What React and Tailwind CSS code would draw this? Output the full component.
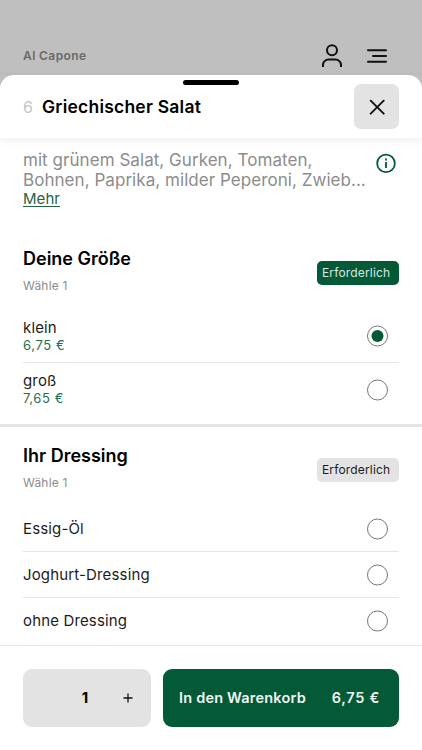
import React, { useState } from "react";

const sizes = [
  { name: "klein", price: "6,75 €" },
  { name: "groß", price: "7,65 €" },
];

const dressings = [
  { name: "Essig-Öl" },
  { name: "Joghurt-Dressing" },
  { name: "ohne Dressing" },
];

const Radio = ({ checked }) => (
  <svg width="22" height="22" viewBox="0 0 22 22" fill="none" className="mr-[11px] shrink-0">
    <circle cx="11.5" cy="11" r="10" stroke="#777777" strokeWidth="1" />
    {checked && <circle cx="11.5" cy="11" r="6" fill="#045a37" />}
  </svg>
);

const GroupHeader = ({ title, active }) => (
  <div className="flex h-[52px] items-center justify-between">
    <div>
      <h2 className="h-[27px] text-[18px] leading-6 font-semibold text-black">{title}</h2>
      <p className="h-[25px] text-[12px] leading-6 tracking-[0.2px] text-[#8c8c8c]">
        Wähle 1
      </p>
    </div>
    <span
      className={`flex h-6 w-[82px] items-center rounded-[5px] pl-[5px] text-[12px] tracking-[0.16px] ${
        active ? "bg-[#045a37] text-[#d9e6e0]" : "bg-[#e3e3e3] text-[#1c1c1c]"
      }`}>
      Erforderlich
    </span>
  </div>
);

const Option = ({ option, checked, onSelect, className }) => (
  <button
    onClick={onSelect}
    className={`flex w-full items-center justify-between text-left ${className}`}>
    <span>
      <span className="block text-[15px] leading-[18px] tracking-[0.15px] text-[#1c1c1c]">
        {option.name}
      </span>
      {option.price && (
        <span className="block text-[13px] leading-[17px] tracking-[0.6px] text-[#1f6f4d]">
          {option.price}
        </span>
      )}
    </span>
    <Radio checked={checked} />
  </button>
);

const App = () => {
  const [size, setSize] = useState("klein");
  const [dressing, setDressing] = useState(null);
  const [count, setCount] = useState(1);

  return (
    <div className="h-[750px] w-[422px] overflow-hidden bg-[#bfbfbf] font-['Inter',sans-serif]">
      {/* Page header behind the sheet */}
      <div className="flex h-[75px] items-end justify-between pr-[34px] pb-[6px] pl-[23px]">
        <span className="pb-[5px] text-[12px] leading-4 font-semibold tracking-[0.4px] text-[#6a6a6a]">
          Al Capone
        </span>
        <div className="flex items-center gap-[22px]">
          <svg width="24" height="26" viewBox="0 0 24 26" fill="none" stroke="#111" strokeWidth="2">
            <circle cx="12" cy="7.3" r="5" />
            <path d="M3 24v-2a5.5 5.5 0 0 1 5.5-5.5h7a5.5 5.5 0 0 1 5.5 5.5v2" />
          </svg>
          <svg width="22" height="26" viewBox="0 0 22 26" fill="none" stroke="#111" strokeWidth="2" strokeLinecap="round">
            <path d="M2 7.3h18M7 13h13M2 18.7h18" />
          </svg>
        </div>
      </div>

      {/* Sheet */}
      <div className="flex h-[675px] flex-col rounded-t-[14px] bg-white">
        <div className="relative flex h-[63px] shrink-0 items-center justify-between px-[23px] shadow-[0_2px_8px_rgba(0,0,0,0.08)]">
          <div className="absolute top-[5px] left-[183px] h-[5px] w-14 rounded-full bg-black" />
          <h1 className="flex items-center text-[17.5px] leading-6 font-semibold tracking-[0.22px] text-black">
            <span className="w-[19px] text-[16px] font-normal text-[#c4c4c4]">6</span>
            Griechischer Salat
          </h1>
          <button className="flex h-[45px] w-[45px] items-center justify-center rounded-[7px] bg-[#e3e3e3]">
            <svg width="16" height="16" viewBox="0 0 16 16" stroke="#111" strokeWidth="1.9" strokeLinecap="round">
              <path d="M1.7 1.7l13 13M14.7 1.7l-13 13" />
            </svg>
          </button>
        </div>

        <div className="flex justify-between pt-[12px] pr-[25px] pl-[23px]">
          <div className="text-[17px] leading-5 tracking-[0.05px] text-[#8c8c8c]">
            <p className="whitespace-nowrap">mit grünem Salat, Gurken, Tomaten,</p>
            <p className="whitespace-nowrap">Bohnen, Paprika, milder Peperoni, Zwieb...</p>
            <button className="block text-[15px] leading-[18px] text-[#1f6345] underline decoration-1 underline-offset-2">
              Mehr
            </button>
          </div>
          <svg width="22" height="22" viewBox="0 0 22 22" fill="none" className="mt-[2px] shrink-0" stroke="#045a37" strokeWidth="1.8">
            <circle cx="11" cy="11.4" r="8.8" />
            <path d="M11 9.9v6M11 6.4v2" />
          </svg>
        </div>

        <section className="mt-[39px] h-[177px] px-[23px]">
          <GroupHeader title="Deine Größe" active />
          <div className="mt-[11px] divide-y divide-[#e6e6e6]">
            {sizes.map((option) => (
              <Option
                key={option.name}
                option={option}
                checked={size === option.name}
                onSelect={() => setSize(option.name)}
                className="h-[53px]"
              />
            ))}
          </div>
        </section>

        <section className="flex-1 border-t-[3px] border-[#e4e4e4] px-[23px] pt-[17px]">
          <GroupHeader title="Ihr Dressing" />
          <div className="mt-[10px] divide-y divide-[#e6e6e6]">
            {dressings.map((option) => (
              <Option
                key={option.name}
                option={option}
                checked={dressing === option.name}
                onSelect={() => setDressing(option.name)}
                className="h-[46px]"
              />
            ))}
          </div>
        </section>

        {/* Footer */}
        <div className="flex h-[105px] shrink-0 gap-3 border-t border-[#e6e6e6] px-[23px] pt-[23px]">
          <div className="flex h-[58px] w-32 items-center rounded-[9px] bg-[#e3e3e3]">
            <span className="ml-[57px] w-[10px] text-center text-[15px] font-bold text-black">
              {count}
            </span>
            <button
              onClick={() => setCount(count + 1)}
              className="ml-[33px] flex h-8 w-[10px] items-center justify-center">
              <svg width="10" height="10" viewBox="0 0 10 10" stroke="#111" strokeWidth="1.3" className="shrink-0">
                <path d="M5 .5v9M.5 5h9" />
              </svg>
            </button>
          </div>
          <button className="flex h-[58px] flex-1 items-center justify-between rounded-[9px] bg-[#045a37] pr-[19px] pl-[16px] text-[14.5px] font-semibold text-[#eef5f1]">
            <span className="tracking-[0.2px]">In den Warenkorb</span>
            <span className="tracking-[0.7px]">6,75 €</span>
          </button>
        </div>
      </div>
    </div>
  );
};

export default App;
